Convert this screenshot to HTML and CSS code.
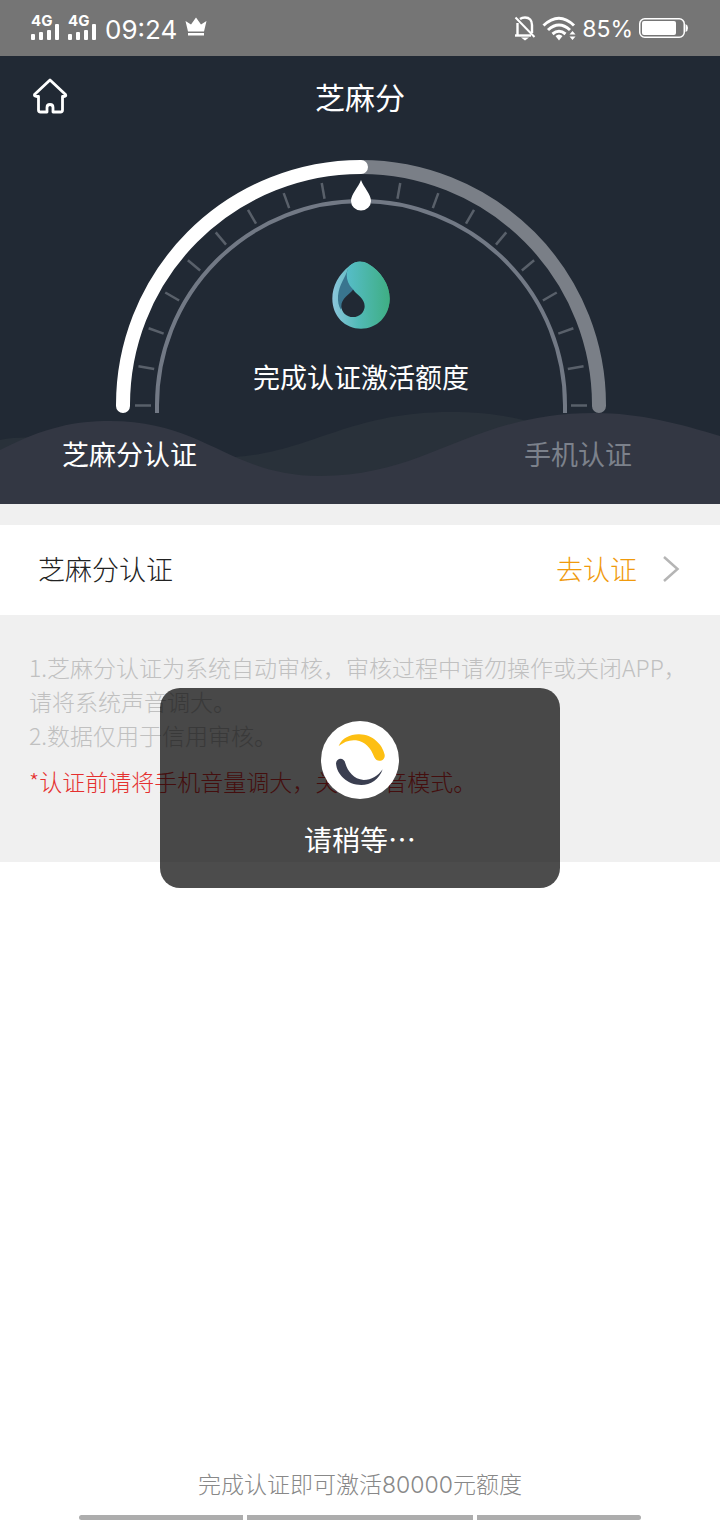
FILE: index.html
```html
<!DOCTYPE html>
<html lang="zh-CN">
<head>
<meta charset="utf-8">
<meta name="viewport" content="width=device-width, initial-scale=1">
<title>芝麻分</title>
<link rel="stylesheet" href="styles.css">
</head>
<body>
<div class="status">
  <div class="status-group">
    <div class="signal"><span class="signal-type">4G</span>
      <svg width="29" height="16" viewBox="0 0 29 16" fill="#fff"><rect x="0" y="10" width="4" height="6" rx="1"/><rect x="8" y="8" width="4" height="8" rx="1"/><rect x="16" y="6" width="4" height="10" rx="1"/><rect x="24" y="0" width="4" height="16" rx="1"/></svg>
    </div>
    <div class="signal"><span class="signal-type">4G</span>
      <svg width="29" height="16" viewBox="0 0 29 16" fill="#fff"><rect x="0" y="10" width="4" height="6" rx="1"/><rect x="8" y="8" width="4" height="8" rx="1"/><rect x="16" y="6" width="4" height="10" rx="1"/><rect x="24" y="0" width="4" height="16" rx="1"/></svg>
    </div>
    <span class="clock">09:24</span>
    <svg class="crown" width="22" height="20" viewBox="0 0 22 20" fill="#fff"><path d="M.5 4 6 7.500 11 .5 16 7.500 21.500 4 19 14.500H3z"/><path d="M3 16h16v2.500H3z"/></svg>
  </div>
  <div class="status-group status-right">
    <svg width="22" height="26" viewBox="0 0 22 26" fill="none" stroke="#fff" stroke-width="2.400"><path d="M3.500 20.500V8"/><path d="M6 4Q8 2.500 11 2.500C15.500 2.500 18 5.500 18 10V18"/><path d="M1 20.500h16"/><path d="M1.500 2.500 20.500 22" stroke-width="2"/><path d="M7 22.500h8L11 25.500z" fill="#fff" stroke="none"/></svg>
    <svg width="34" height="25" viewBox="0 0 34 25" fill="none" stroke="#fff" stroke-width="3"><path d="M1.500 9.500Q17-5 32 9.500"/><path d="M6 14q11-10 22 0"/><path d="M10.500 18q6.500-5.500 13 0" /><path d="M13.500 20q3.500-3 7 0L17 24.500z" fill="#fff" stroke="none"/><path d="M27.500 18.500 30.500 15l3 3.500zM27.500 20.500l3 3.500 3-3.500z" fill="#fff" stroke="none"/></svg>
    <span class="percent">85%</span>
    <svg class="battery" width="50" height="20" viewBox="0 0 50 20"><rect x=".75" y=".75" width="44.500" height="18.500" rx="5" fill="none" stroke="#fff" stroke-width="1.500"/><rect x="3" y="3" width="34" height="14" rx="2" fill="#fff"/><path d="M46.500 6q2.500 1 2.500 4t-2.500 4z" fill="#fff"/></svg>
  </div>
</div>

<main class="screen">
  <section class="hero">
    <svg class="waves" viewBox="0 0 720 100" preserveAspectRatio="none" aria-hidden="true">
      <path d="M0 36C40 28 80 42 130 46L235 53C310 48 350 8 450 8 530 8 560 30 620 50V100H0z" fill="#29313a"/>
      <path d="M0 46C45 23 75 17 110 17 205 17 230 72 320 72 430 72 470 9 595 9 640 9 680 20 720 32V100H0z" fill="#333743"/>
    </svg>
    <header class="topbar">
      <a class="home" href="#" aria-label="首页">
        <svg width="36" height="36" viewBox="0 0 36 36" fill="none" stroke="#fff" stroke-width="2.800" stroke-linejoin="round" stroke-linecap="round"><path d="M18 2 2.500 16.500Q2 18.500 5 18.500H6.500V32q0 2 2 2H15V29.500Q15 26.500 18 26.500T21 29.500V34h7.500q2 0 2-2V18.500H32Q34.500 18.500 33.500 16.500z"/></svg>
      </a>
      <h1 class="title">芝麻分</h1>
    </header>
    <div class="gauge">
      <svg class="dial" viewBox="0 0 490 256" fill="none" aria-hidden="true">
        <path d="M246 9A238 238 0 0 1 484 248" stroke="#7a7f87" stroke-width="14" stroke-linecap="round"/>
        <path d="M8 248A238 238 0 0 1 246 9" stroke="#fff" stroke-width="14" stroke-linecap="round"/>
        <path d="M42 255V247A204 204 0 0 1 450 247V255" stroke="#727985" stroke-width="4"/>
        <g id="ticks" stroke="#59606a" stroke-width="2.500">
          <path d="M20 247.500h16"/>
          <path d="M20 247.500h16" transform="rotate(10 246 247.500)"/>
          <path d="M20 247.500h16" transform="rotate(20 246 247.500)"/>
          <path d="M20 247.500h16" transform="rotate(30 246 247.500)"/>
          <path d="M20 247.500h16" transform="rotate(40 246 247.500)"/>
          <path d="M20 247.500h16" transform="rotate(50 246 247.500)"/>
          <path d="M20 247.500h16" transform="rotate(60 246 247.500)"/>
          <path d="M20 247.500h16" transform="rotate(70 246 247.500)"/>
          <path d="M20 247.500h16" transform="rotate(80 246 247.500)"/>
        </g>
        <use href="#ticks" transform="matrix(-1 0 0 1 492 0)"/>
        <path d="M246 22C249 30 256 36 256 43A10 9.500 0 0 1 236 43C236 36 243 30 246 22z" fill="#fff"/>
      </svg>
      <div class="gauge-body">
        <svg width="58" height="68" viewBox="0 0 174 204" aria-hidden="true">
          <defs>
            <linearGradient id="leaf" x1="0" x2="1"><stop offset="0" stop-color="#56bdc8"/><stop offset="1" stop-color="#3fae83"/></linearGradient>
            <linearGradient id="ring" x1="0" x2="1"><stop offset="0" stop-color="#8cc5dc"/><stop offset=".45" stop-color="#52bab7"/><stop offset="1" stop-color="#3fae83"/></linearGradient>
          </defs>
          <path d="M52 15C20 40 1 76 1 113 1 166 40 203 87 203S173 166 173 113C173 70 146 30 108 8Q75-7 52 15z" fill="url(#ring)"/>
          <path d="M48 24C38 55 22 68 18 105 17 122 20 136 27 146L40 110 68 92 56 50z" fill="#39758f"/>
          <path d="M52 15C72-3 94 0 108 8 146 30 173 70 173 113 173 150 150 180 120 192L98 140C94 112 76 98 60 82 44 64 38 39 52 15z" fill="url(#leaf)"/>
          <path d="M63 86C50 102 28 112 28 136A35 32 0 0 0 98 136C98 112 76 102 63 86z" fill="#212934"/>
        </svg>
        <p class="gauge-text">完成认证激活额度</p>
      </div>
    </div>
    <div class="steps"><span>芝麻分认证</span><span class="step-pending">手机认证</span></div>
  </section>

  <section class="row">
    <span>芝麻分认证</span>
    <a class="row-action" href="#"><span>去认证</span>
      <svg width="18" height="28" viewBox="0 0 18 28" fill="none" stroke="#b5b5b5" stroke-width="2.500"><path d="M2 2 15.500 14 2 26"/></svg>
    </a>
  </section>

  <section class="notes">
    <p>1.芝麻分认证为系统自动审核，审核过程中请勿操作或关闭APP，请将系统声音调大。</p>
    <p>2.数据仅用于信用审核。</p>
    <p class="warning">*认证前请将手机音量调大，关闭静音模式。</p>
  </section>

  <footer class="footer">
    <p>完成认证即可激活80000元额度</p>
    <div class="navbar"><i></i><i></i><i></i></div>
  </footer>

  <div class="overlay">
    <div class="toast" role="status">
      <svg width="80" height="80" viewBox="0 0 240 240" aria-hidden="true">
        <circle cx="120" cy="120" r="117" fill="#fff"/>
        <path d="M56 78C66 54 92 42 118 43 158 44 187 73 194 104 197 123 171 130 163 112 151 82 137 66 108 61 87 59 72 66 56 78z" fill="#fdbf12"/>
        <path d="M48 130C50 112 73 112 76 130 83 154 101 178 131 180 155 180 174 168 188 148 177 179 152 195 124 195 82 195 50 164 48 130z" fill="#3a3e50"/>
      </svg>
      <p>请稍等⋯</p>
    </div>
  </div>
</main>
</body>
</html>
```
FILE: styles.css
```css
* { box-sizing: border-box; }

body {
  margin: 0;
  min-height: 100vh;
  display: flex;
  flex-direction: column;
  background: #fff;
  color: #222;
  font-family: "Noto Sans CJK SC", sans-serif;
  font-size: 27px;
  font-weight: 300;
}

p, h1 { margin: 0; font-weight: inherit; }
a { color: inherit; text-decoration: none; }
svg { display: block; flex: none; }

.status {
  height: 56px;
  padding: 0 31px;
  display: flex;
  justify-content: space-between;
  align-items: center;
  background: #757575;
  color: #fff;
  font-family: Inter, sans-serif;
  font-weight: 400;
}
.status-group { display: flex; align-items: center; gap: 8px; }
.status-right { gap: 6px; }
.signal { display: flex; flex-direction: column; padding-bottom: 2px; }
.signal-type { height: 9px; font-size: 15px; line-height: 12px; font-weight: 700; }
.clock { font-size: 26px; line-height: 32px; padding-top: 4px; }
.crown { margin-bottom: 2px; }
.percent { font-size: 23px; line-height: 28px; padding-top: 2px; }

.screen { flex: 1; position: relative; display: flex; flex-direction: column; }

.hero {
  position: relative;
  background: #212934;
  color: #fff;
  font-weight: 400;
}
.waves { position: absolute; left: 0; bottom: 0; width: 100%; height: 100px; }

.topbar {
  height: 84px;
  padding: 0 32px 4px;
  display: grid;
  grid-template-columns: 36px 1fr 36px;
  align-items: center;
}
.home { display: block; }
.title { text-align: center; font-size: 30px; line-height: 40px; }

.gauge {
  position: relative;
  width: 490px;
  max-width: 90%;
  margin: 18px auto 0;
}
.dial { width: 100%; overflow: visible; }
.gauge-body {
  position: absolute;
  inset: 0;
  display: flex;
  flex-direction: column;
  align-items: center;
  justify-content: flex-end;
  gap: 28px;
  padding: 0 0 17px 2px;
}
.gauge-text { line-height: 40px; }

.steps {
  position: relative;
  display: flex;
  justify-content: space-between;
  padding: 20px 88px 30px 62px;
  line-height: 40px;
}
.step-pending { color: #7c818b; }

.row {
  height: 111px;
  padding: 0 40px 2px 38px;
  display: flex;
  justify-content: space-between;
  align-items: center;
  border-top: 21px solid #f0f0f0;
  background: #fff;
}
.row span { padding-bottom: 2px; }
.row-action { display: flex; align-items: center; gap: 25px; color: #f09a0c; }

.notes {
  padding: 35px 28px 64px 29px;
  background: #f0f0f0;
  color: #c0c0c0;
  font-size: 23px;
  line-height: 34px;
}
.warning { margin-top: 12px; color: #e5302f; }

.footer {
  margin-top: auto;
  display: flex;
  flex-direction: column;
  align-items: center;
  gap: 13px;
  color: #888;
  font-family: Inter, "Noto Sans CJK SC", sans-serif;
  font-size: 23px;
  line-height: 34px;
}
.navbar {
  width: 78%;
  display: grid;
  grid-template-columns: 163fr 226fr 163fr;
  gap: 4px;
  border-radius: 3px;
  overflow: hidden;
}
.navbar i { height: 5px; background: #adadad; }

.overlay {
  position: absolute;
  inset: 0;
  display: grid;
  place-items: center;
}
.toast {
  width: 400px;
  max-width: 90%;
  padding: 32px 20px 29px;
  display: flex;
  flex-direction: column;
  align-items: center;
  gap: 19px;
  border-radius: 20px;
  background: rgba(0, 0, 0, .7);
  color: #fff;
  font-size: 28px;
  font-weight: 400;
  line-height: 40px;
}
```
